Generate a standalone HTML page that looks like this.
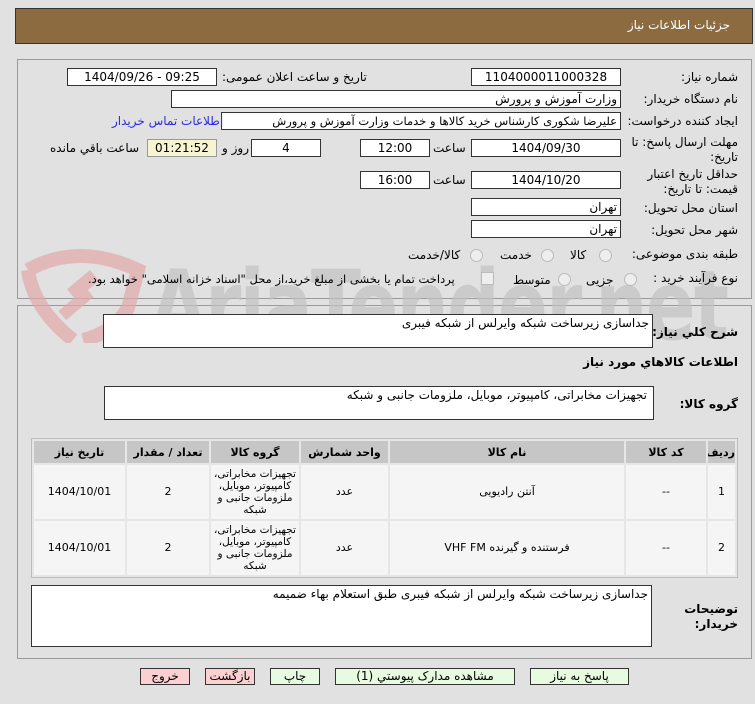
<!DOCTYPE html>
<html><head><meta charset="utf-8">
<style>
body{margin:0;width:755px;height:704px;background:#e1e1e1;font-family:"DejaVu Sans","Liberation Sans",sans-serif;font-size:12px;color:#000;position:relative;overflow:hidden}
.a{position:absolute;white-space:nowrap}
.hdr{left:15px;top:8px;width:736px;height:34px;background:#8c6b41;border:1px solid #333}
.panel{border:1px solid #999;background:transparent}
.in{position:absolute;background:#fff;border:1px solid #333;box-sizing:border-box;font-size:12px;line-height:16px;text-align:center;white-space:nowrap;overflow:hidden}
.r{text-align:right;padding-right:3px}
.lb{position:absolute;white-space:nowrap;direction:rtl;font-size:12px}
.b{font-weight:bold}
.rad{position:absolute;width:11px;height:11px;border:1px solid #bbb;border-radius:50%;background:#eee}
table{border-collapse:separate;border-spacing:2px;position:absolute;left:31px;top:438px;width:707px;border:1px solid #bbb;background:#e6e6e6;font-size:11px;table-layout:fixed}
th{background:#c6c6c6;height:22px;font-weight:bold;padding:0;overflow:hidden;white-space:nowrap}
td{background:#f5f5f5;text-align:center;line-height:12px;padding:0;overflow:hidden}
.btn{position:absolute;top:668px;height:17px;border:1px solid #333;box-sizing:border-box;font-size:12px;text-align:center;line-height:15px}
.g{background:#e6fbe0}.p{background:#fbd0d0}
.wm{position:absolute;left:150px;top:250px;font-size:96px;font-weight:bold;color:#c2c2c2;opacity:.7;font-family:"DejaVu Sans Condensed","Liberation Sans Narrow",sans-serif;letter-spacing:-2px;transform:scaleX(.85);transform-origin:left}
</style></head><body>
<div class="a hdr"></div>
<div class="lb" style="right:25px;top:18px;color:#fff;font-size:12px">جزئیات اطلاعات نیاز</div>

<div class="a panel" style="left:17px;top:59px;width:733px;height:238px"></div>
<div class="a panel" style="left:17px;top:305px;width:733px;height:352px"></div>

<svg class="a" style="left:18px;top:248px;opacity:.7" width="130" height="95" viewBox="0 0 130 95">
<path d="M10 22 Q60 -6 120 22 L110 60 Q95 85 65 92" fill="none" stroke="#e3a9a9" stroke-width="14"/>
<path d="M10 22 Q15 60 55 92" fill="none" stroke="#e3a9a9" stroke-width="14"/>
<rect x="50" y="30" width="30" height="14" fill="#e3a9a9" transform="rotate(-40 65 37)"/>
<rect x="40" y="50" width="36" height="12" fill="#e3a9a9" transform="rotate(-40 58 56)"/>
</svg>
<div class="wm">AriaTender.net</div>

<div class="lb" style="right:17px;top:70px">شماره نیاز:</div>
<div class="in" style="left:471px;top:68px;width:150px;height:18px">1104000011000328</div>
<div class="lb" style="left:222px;top:70px">تاریخ و ساعت اعلان عمومی:</div>
<div class="in" style="left:67px;top:68px;width:150px;height:18px">1404/09/26 - 09:25</div>
<div class="lb" style="right:17px;top:92px">نام دستگاه خریدار:</div>
<div class="in r" style="left:171px;top:90px;width:450px;height:18px">وزارت آموزش و پرورش</div>
<div class="lb" style="right:17px;top:114px">ایجاد کننده درخواست:</div>
<div class="in r" style="left:221px;top:112px;width:400px;height:18px;font-size:11.5px">علیرضا شکوری کارشناس خرید کالاها و خدمات وزارت آموزش و پرورش</div>
<div class="lb" style="left:112px;top:114px;color:#2a2ae0">اطلاعات تماس خریدار</div>
<div class="lb" style="right:17px;top:135px">مهلت ارسال پاسخ: تا</div>
<div class="lb" style="right:17px;top:150px">تاریخ:</div>
<div class="in" style="left:471px;top:139px;width:150px;height:18px">1404/09/30</div>
<div class="lb" style="left:433px;top:141px">ساعت</div>
<div class="in" style="left:360px;top:139px;width:70px;height:18px">12:00</div>
<div class="in" style="left:251px;top:139px;width:70px;height:18px">4</div>
<div class="lb" style="left:222px;top:141px">روز و</div>
<div class="in" style="left:147px;top:139px;width:70px;height:18px;background:#f5f5d2;border-color:#999">01:21:52</div>
<div class="lb" style="left:50px;top:141px">ساعت باقي مانده</div>
<div class="lb" style="right:17px;top:167px">حداقل تاریخ اعتبار</div>
<div class="lb" style="right:17px;top:182px">قیمت: تا تاریخ:</div>
<div class="in" style="left:471px;top:171px;width:150px;height:18px">1404/10/20</div>
<div class="lb" style="left:433px;top:173px">ساعت</div>
<div class="in" style="left:360px;top:171px;width:70px;height:18px">16:00</div>
<div class="lb" style="right:17px;top:201px">استان محل تحویل:</div>
<div class="in r" style="left:471px;top:198px;width:150px;height:18px">تهران</div>
<div class="lb" style="right:17px;top:223px">شهر محل تحویل:</div>
<div class="in r" style="left:471px;top:220px;width:150px;height:18px">تهران</div>
<div class="lb" style="right:17px;top:247px">طبقه بندی موضوعی:</div>
<div class="rad" style="left:599px;top:249px"></div>
<div class="lb" style="left:570px;top:248px">کالا</div>
<div class="rad" style="left:541px;top:249px"></div>
<div class="lb" style="left:500px;top:248px">خدمت</div>
<div class="rad" style="left:470px;top:249px"></div>
<div class="lb" style="left:408px;top:248px">کالا/خدمت</div>
<div class="lb" style="right:17px;top:271px">نوع فرآیند خرید :</div>
<div class="rad" style="left:624px;top:273px"></div>
<div class="lb" style="left:586px;top:273px">جزیی</div>
<div class="rad" style="left:558px;top:273px"></div>
<div class="lb" style="left:513px;top:273px">متوسط</div>
<div class="a" style="left:481px;top:272px;width:11px;height:11px;border:1px solid #bbb;background:#eee"></div>
<div class="lb" style="left:88px;top:272px;font-size:11.5px">پرداخت تمام یا بخشی از مبلغ خرید،از محل "اسناد خزانه اسلامی" خواهد بود.</div>

<div class="lb b" style="right:17px;top:325px">شرح کلي نیاز:</div>
<div class="in r" style="left:103px;top:314px;width:550px;height:34px;text-align:right">جداسازی زیرساخت شبکه وایرلس از شبکه فیبری</div>
<div class="lb b" style="right:17px;top:355px">اطلاعات کالاهاي مورد نیاز</div>
<div class="lb b" style="right:17px;top:397px">گروه کالا:</div>
<div class="in r" style="left:104px;top:386px;width:550px;height:34px;text-align:right;padding-right:6px">تجهیزات مخابراتی، کامپیوتر، موبایل، ملزومات جانبی و شبکه</div>

<table dir="rtl">
<colgroup><col style="width:27px"><col style="width:80px"><col style="width:234px"><col style="width:87px"><col style="width:88px"><col style="width:82px"><col></colgroup>
<tr><th>ردیف</th><th>کد کالا</th><th>نام کالا</th><th>واحد شمارش</th><th>گروه کالا</th><th>تعداد / مقدار</th><th>تاریخ نیاز</th></tr>
<tr style="height:54px"><td>1</td><td>--</td><td>آنتن رادیویی</td><td>عدد</td><td style="font-size:10.5px">تجهیزات مخابراتی، کامپیوتر، موبایل، ملزومات جانبی و شبکه</td><td>2</td><td>1404/10/01</td></tr>
<tr style="height:54px"><td>2</td><td>--</td><td>فرستنده و گیرنده VHF FM</td><td>عدد</td><td style="font-size:10.5px">تجهیزات مخابراتی، کامپیوتر، موبایل، ملزومات جانبی و شبکه</td><td>2</td><td>1404/10/01</td></tr>
</table>

<div class="lb b" style="right:17px;top:602px">توضیحات</div>
<div class="lb b" style="right:17px;top:617px">خریدار:</div>
<div class="in r" style="left:31px;top:585px;width:621px;height:62px;text-align:right">جداسازی زیرساخت شبکه وایرلس از شبکه فیبری طبق استعلام بهاء ضمیمه</div>

<div class="btn g" style="left:530px;width:99px">پاسخ به نیاز</div>
<div class="btn g" style="left:335px;width:180px">مشاهده مدارک پیوستي (1)</div>
<div class="btn g" style="left:270px;width:50px">چاپ</div>
<div class="btn p" style="left:205px;width:50px">بازگشت</div>
<div class="btn p" style="left:140px;width:50px">خروج</div>
</body></html>
